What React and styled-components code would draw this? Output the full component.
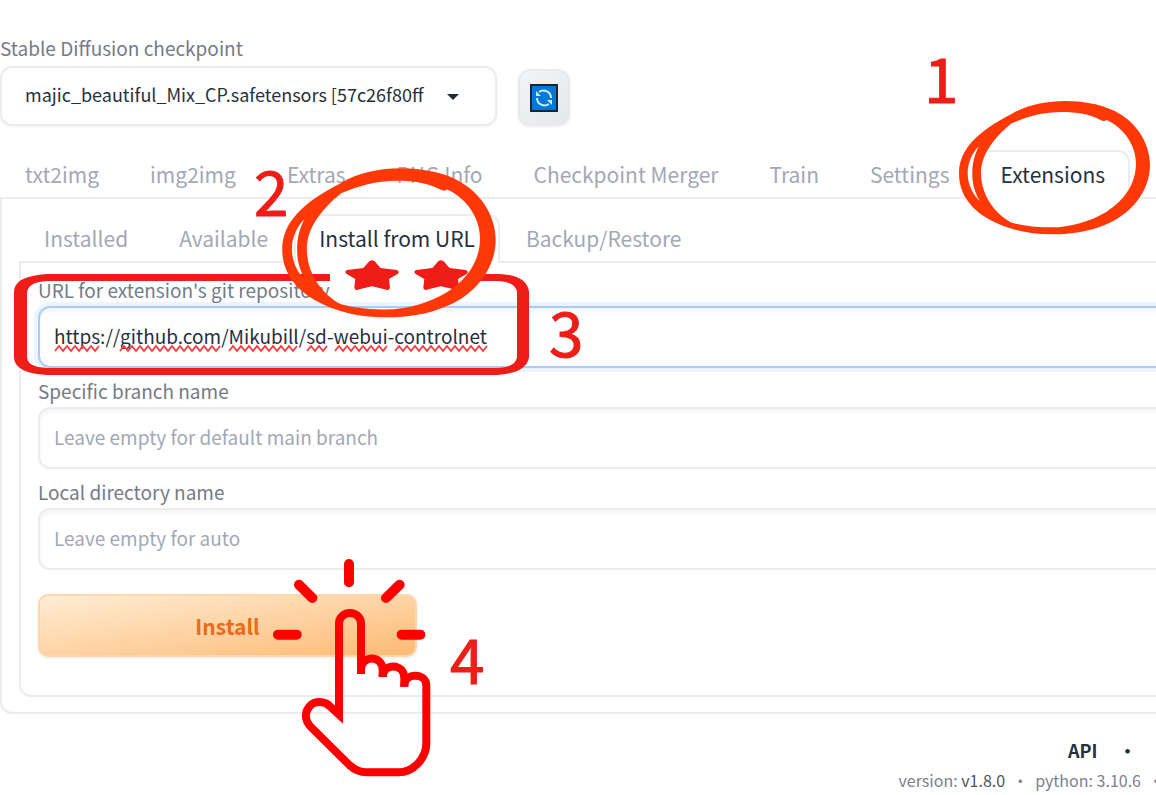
import React from 'react';
import styled, { createGlobalStyle } from 'styled-components';

const Global = createGlobalStyle`
  * { box-sizing: border-box; }
  body {
    margin: 0;
    background: #fff;
    color: #27303f;
    font-family: "Noto Sans CJK SC", "Noto Sans", sans-serif;
    overflow-x: hidden;
  }
  button, input, select { font: inherit; color: inherit; margin: 0; }
`;

const Page = styled.div`
  position: relative;
  min-height: 100vh;
  padding-top: 36px;
  overflow: hidden;
`;

const Label = styled.label`
  display: block;
  font-size: 19px;
  line-height: 24px;
  color: #747b88;
`;

const TopBar = styled.header`
  display: flex;
  align-items: flex-end;
  gap: 21px;
`;

const Checkpoint = styled.div`
  width: 43%;
`;

const SelectBox = styled.div`
  position: relative;
  margin-top: 6px;
  svg { position: absolute; right: 38px; top: 28px; pointer-events: none; }
`;

const Select = styled.select`
  display: block;
  appearance: none;
  width: 100%;
  height: 60px;
  padding: 0 60px 4px 23px;
  border: 2px solid #ebecf0;
  border-radius: 12px;
  background: #fff;
  box-shadow: 0 1px 3px rgba(0, 0, 0, 0.05);
  font-size: 18px;
`;

const RefreshButton = styled.button`
  display: grid;
  place-items: center;
  width: 52px;
  height: 57px;
  padding: 0;
  border: 2px solid #e8eaee;
  border-radius: 12px;
  background: linear-gradient(135deg, #f3f4f6, #e5e7eb);
  box-shadow: 0 1px 3px rgba(0, 0, 0, 0.08);
`;

const Tabs = styled.nav`
  display: flex;
  gap: 1px;
  position: relative;
  margin-bottom: -2px;
`;

const Tab = styled.button`
  flex: none;
  height: 49px;
  padding: 0 23px 3px;
  border: 2px solid ${(p) => (p.$active ? '#ebecf0' : 'transparent')};
  border-bottom: 0;
  border-radius: 12px 12px 0 0;
  background: ${(p) => (p.$active ? '#fff' : 'transparent')};
  color: ${(p) => (p.$active ? '#27303f' : '#a3a8b5')};
  font-size: 21px;
  line-height: 28px;
  white-space: nowrap;
`;

const Main = styled.main`
  margin: 24px -24px 0 0;
`;

const Panel = styled.section`
  padding: 15px 0 15px 17px;
  border: 2px solid #ebecf0;
  border-radius: 0 0 12px 12px;
`;

const FormPanel = styled.form`
  padding: 15px 0 38px 17px;
  border: 2px solid #ebecf0;
  border-radius: 0 0 12px 12px;
`;

const Field = styled.div`
  margin-bottom: 11px;
`;

const TextInput = styled.input`
  display: block;
  width: 100%;
  height: 62px;
  margin-top: 4px;
  padding: 0 14px 4px;
  border: 2px solid ${(p) => (p.$focused ? '#a9cdfb' : '#ebecf0')};
  border-radius: 12px;
  background: #fff;
  box-shadow: ${(p) => (p.$focused ? '0 0 0 4px #edf4fe, ' : '')}inset 0 3px 5px rgba(0, 0, 0, 0.05);
  font-size: 19px;
  outline: none;
  &::placeholder { color: #a3a8b5; opacity: 1; }
`;

const InstallButton = styled.button`
  display: block;
  width: 379px;
  height: 63px;
  margin-top: 24px;
  border: 2px solid #fed7aa;
  border-radius: 10px;
  background: linear-gradient(to bottom right, #ffedd5, #fdba74);
  box-shadow: 0 1px 3px rgba(0, 0, 0, 0.08);
  color: #ea6a20;
  font-size: 21px;
  font-weight: 700;
`;

const Footer = styled.footer`
  padding-top: 22px;
`;

const FooterLinks = styled.div`
  display: flex;
  justify-content: flex-end;
  gap: 21px;
  margin-right: -62px;
  font-size: 18px;
  font-weight: 700;
  line-height: 28px;
  a { color: inherit; text-decoration: none; }
`;

const Versions = styled.div`
  display: flex;
  justify-content: flex-end;
  gap: 7px;
  margin-right: -8px;
  font-size: 16px;
  line-height: 32px;
  color: #7b818d;
  a { color: #4b5563; text-decoration: none; }
`;

const Marks = styled.svg`
  position: absolute;
  left: 0;
  top: 0;
  pointer-events: none;
`;

const Step = styled.span`
  position: absolute;
  left: ${(p) => p.$x}px;
  top: ${(p) => p.$y}px;
  color: #ee1d18;
  font-size: 62px;
  line-height: 62px;
  -webkit-text-stroke: 1px #ee1d18;
  pointer-events: none;
`;

const RING =
  'M455,222C500,195 560,183 615,183C680,183 740,197 780,222C835,255 870,315 870,375C870,440 830,505 760,543C705,570 650,583 575,583C500,583 440,567 385,537C330,505 297,460 297,400C297,330 350,275 455,222Z' +
  'M605,216C550,216 500,230 455,250C400,295 363,345 363,400C363,460 400,520 455,548C500,560 540,562 575,562C630,562 690,545 740,515C795,480 828,430 828,370C828,320 795,265 740,240Q732,246 722,240C690,222 650,216 605,216Z' +
  'M357,318C335,340 323,370 323,400C323,430 335,460 360,484C340,450 337,425 337,400C337,370 343,345 357,318Z';

const STAR =
  'M72,4Q80,-3 88,4L106,24L154,30Q165,34 157,42L131,57L134,83Q132,93 118,88L80,79L42,88Q29,93 27,83L30,57L4,42Q-5,34 6,30L54,24Z';

function wave(x1, x2) {
  let d = `M${x1},351`;
  let up = true;
  for (let x = x1 + 4; x <= x2; x += 4) {
    d += `L${x},${up ? 346 : 351}`;
    up = !up;
  }
  return d;
}

const MISSPELT = [[55, 101], [120, 223], [229, 300], [307, 328], [335, 388], [395, 487]];
const TABS = ['txt2img', 'img2img', 'Extras', 'PNG Info', 'Checkpoint Merger', 'Train', 'Settings', 'Extensions'];
const SUBTABS = ['Installed', 'Available', 'Install from URL', 'Backup/Restore'];

function RefreshIcon() {
  return (
    <svg width="28" height="28" viewBox="0 0 28 28" aria-hidden="true">
      <rect x="1" y="1" width="26" height="26" fill="#0078d7" stroke="#14283c" strokeWidth="2" />
      <g fill="none" stroke="#d4ebff" strokeWidth="2">
        <path d="M9,8A7.500,7.500 0 0 1 21,14" />
        <path d="M19,20A7.500,7.500 0 0 1 7,14" />
      </g>
      <path d="M6,7V12H11ZM22,21V16H17Z" fill="#d4ebff" />
    </svg>
  );
}

function Drawing() {
  return (
    <Marks width="1156" height="795" viewBox="0 0 1156 795" aria-hidden="true">
      <g fill="none" stroke="#f8434a" strokeWidth="2">
        {MISSPELT.map(([a, b]) => <path key={a} d={wave(a, b)} />)}
      </g>
      <path
        fill="#ee1d18"
        fillRule="evenodd"
        d="M330,274H47Q14,276 14,292V357Q14,373 47,375H497Q527,373 529,357V292Q527,275 499,274H470V281H497Q516,282 517,292V357Q516,367 497,368H47Q27,367 27,357V294Q27,282 47,281H330Z"
      />
      <g fill="#ee1d18">
        <path d={STAR} transform="translate(345.300 260) scale(.3333)" />
        <path d={STAR} transform="translate(414.300 260) scale(.3333)" />
      </g>
      <g fill="#ff3807" fillRule="evenodd">
        <path d={RING} transform="translate(860 40) scale(.3333)" />
        <path d={RING} transform="translate(171.600 100.200) scale(.3725)" />
      </g>
      <g transform="translate(260 540) scale(.3333)" fill="none" stroke="#f00">
        <g strokeWidth="24">
          <path d="M303,402V250A33,31 0 0 0 237,250V524L210,499C195,484 165,480 148,500C133,518 135,540 150,558L268,675Q292,697 320,697H415C460,697 499,655 499,610V437C499,397 433,397 433,437V440" />
          <path d="M303,390C303,344 368,344 368,390V411" />
          <path d="M368,411C368,368 433,368 433,415V440" />
        </g>
        <g strokeWidth="30" strokeLinecap="round">
          <path d="M267,72V127M117,134L157,174M419,134L378,174M54,284H110M425,284H481" />
        </g>
      </g>
    </Marks>
  );
}

export default function App() {
  return (
    <Page>
      <Global />
      <TopBar>
        <Checkpoint>
          <Label htmlFor="checkpoint">Stable Diffusion checkpoint</Label>
          <SelectBox>
            <Select id="checkpoint">
              <option>majic_beautiful_Mix_CP.safetensors [57c26f80ff</option>
            </Select>
            <svg width="12" height="6" viewBox="0 0 12 6" aria-hidden="true">
              <path d="M0,0H12L6,6Z" fill="#1f2937" />
            </svg>
          </SelectBox>
        </Checkpoint>
        <RefreshButton type="button" aria-label="Refresh"><RefreshIcon /></RefreshButton>
      </TopBar>
      <Main>
        <Tabs>
          {TABS.map((t) => <Tab key={t} type="button" $active={t === 'Extensions'}>{t}</Tab>)}
        </Tabs>
        <Panel>
          <Tabs>
            {SUBTABS.map((t) => <Tab key={t} type="button" $active={t === 'Install from URL'}>{t}</Tab>)}
          </Tabs>
          <FormPanel onSubmit={(e) => e.preventDefault()}>
            <Field>
              <Label htmlFor="url">URL for extension's git repository</Label>
              <TextInput id="url" $focused spellCheck={false} defaultValue="https://github.com/Mikubill/sd-webui-controlnet" />
            </Field>
            <Field>
              <Label htmlFor="branch">Specific branch name</Label>
              <TextInput id="branch" placeholder="Leave empty for default main branch" />
            </Field>
            <Field>
              <Label htmlFor="dir">Local directory name</Label>
              <TextInput id="dir" placeholder="Leave empty for auto" />
            </Field>
            <InstallButton>Install</InstallButton>
          </FormPanel>
        </Panel>
      </Main>
      <Footer>
        <FooterLinks>
          <a href="#api">API</a>
          <span>•</span>
          <a href="#github">Github</a>
        </FooterLinks>
        <Versions>
          <span>version: <a href="#version">v1.8.0</a></span>
          <span>•</span>
          <span>python: 3.10.6</span>
          <span>•</span>
        </Versions>
      </Footer>
      <Drawing />
      <Step $x={924} $y={45}>1</Step>
      <Step $x={254} $y={158}>2</Step>
      <Step $x={549} $y={299}>3</Step>
      <Step $x={450} $y={626}>4</Step>
    </Page>
  );
}
